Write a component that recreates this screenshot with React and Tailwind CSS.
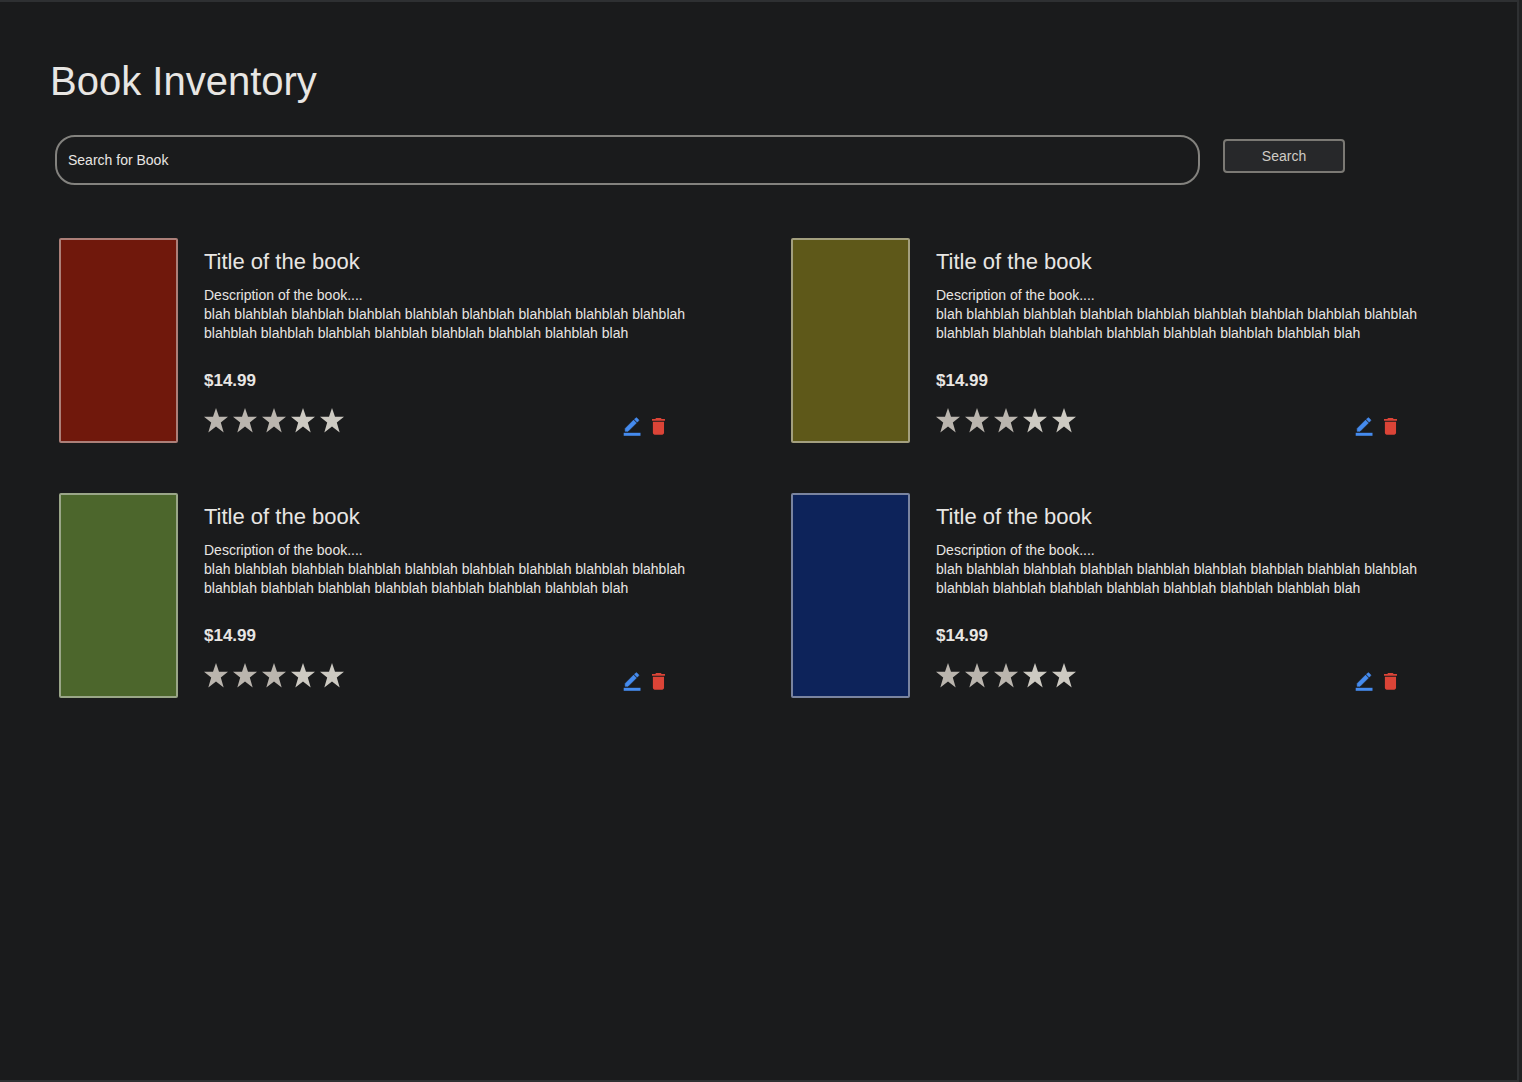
const books = [
  { id: 1, cover: "bg-[#70180c]" },
  { id: 2, cover: "bg-[#5e5819]" },
  { id: 3, cover: "bg-[#4c662c]" },
  { id: 4, cover: "bg-[#0d235a]" },
];

const starColors = ["#bab5ae", "#bab5ae", "#bab5ae", "#cdcac2", "#cdcac2"];

function Star({ color }) {
  return (
    <svg width="24" height="25" viewBox="0 0 24 25" fill={color}>
      <path d="M12 0l3 8.8h9l-7.2 5.7 2.9 9.9L12 18.6l-7.7 5.8 2.9-9.9L0 8.8h9z" />
    </svg>
  );
}

function EditIcon() {
  return (
    <svg width="18" height="20" viewBox="0 0 18 20" fill="#458bee">
      <path
        transform="translate(-.1 -1.6) scale(.76)"
        stroke="#458bee"
        strokeWidth=".7"
        d="M3 17.25V21h3.75L17.81 9.94l-3.75-3.75L3 17.25zM20.71 7.04c.39-.39.39-1.02 0-1.41l-2.34-2.34c-.39-.39-1.02-.39-1.41 0l-1.83 1.83 3.75 3.75 1.83-1.83z"
      />
      <path d="M.7 15.8h16.8v3H.7z" />
    </svg>
  );
}

function TrashIcon() {
  return (
    <svg width="14" height="20" viewBox="0 0 14 20" fill="#db4437">
      <path
        transform="translate(-4.7 -1.8) scale(.93)"
        d="M6 19c0 1.1.9 2 2 2h8c1.1 0 2-.9 2-2V7H6v12zM19 4h-3.5l-1-1h-5l-1 1H5v2h14V4z"
      />
    </svg>
  );
}

function Book({ cover }) {
  return (
    <article className="flex gap-[26px]">
      <div className={`h-[205px] w-[119px] shrink-0 rounded-xs border-2 border-[#e8e6e3]/50 ${cover}`} />
      <div className="flex max-w-[492px] flex-1 flex-col pt-[11px]">
        <h2 className="text-[22px] leading-[26px]">Title of the book</h2>
        <p className="mt-[11px] text-sm leading-[19px]">
          Description of the book....
          <br />
          blah blahblah blahblah blahblah blahblah blahblah blahblah blahblah blahblah blahblah
          blahblah blahblah blahblah blahblah blahblah blahblah blah
        </p>
        <p className="mt-7 text-[17px] leading-5 font-bold">$14.99</p>
        <div className="mt-[17px] flex justify-between pr-[30px]">
          <div className="flex gap-[5px]" role="img" aria-label="Rating">
            {starColors.map((color, i) => (
              <Star key={i} color={color} />
            ))}
          </div>
          <div className="mt-[9px] flex h-5 gap-[11px]">
            <button type="button" aria-label="Edit book">
              <EditIcon />
            </button>
            <button type="button" aria-label="Delete book">
              <TrashIcon />
            </button>
          </div>
        </div>
      </div>
    </article>
  );
}

export default function App() {
  return (
    <div className="min-h-screen bg-[#212223] pr-[3px] font-['Liberation_Sans',Arial,sans-serif] text-[#e8e6e3]">
      <div className="min-h-screen border-t-2 border-r-2 border-b-2 border-[#2e3032] bg-[#1a1b1c]">
        <h1 className="pt-14 pl-[50px] text-[40px] leading-[46px]">Book Inventory</h1>
        <form className="mt-[31px] flex gap-[23px] pr-[172px] pl-[55px]" onSubmit={(e) => e.preventDefault()}>
          <input
            type="text"
            aria-label="Search for Book"
            placeholder="Search for Book"
            className="h-[50px] min-w-0 flex-1 rounded-[20px] border-2 border-[#83827e] bg-transparent px-[11px] text-sm outline-none placeholder:text-[#e8e6e3]"
          />
          <button
            type="submit"
            className="mt-1 h-[34px] w-[122px] rounded-sm border-2 border-[#7b7974] bg-[#27282a] text-sm text-[#cfccc6]"
          >
            Search
          </button>
        </form>
        <main className="mt-[53px] grid grid-cols-2 gap-x-6 gap-y-[50px] pr-[18px] pl-[59px]">
          {books.map((book) => (
            <Book key={book.id} cover={book.cover} />
          ))}
        </main>
      </div>
    </div>
  );
}
